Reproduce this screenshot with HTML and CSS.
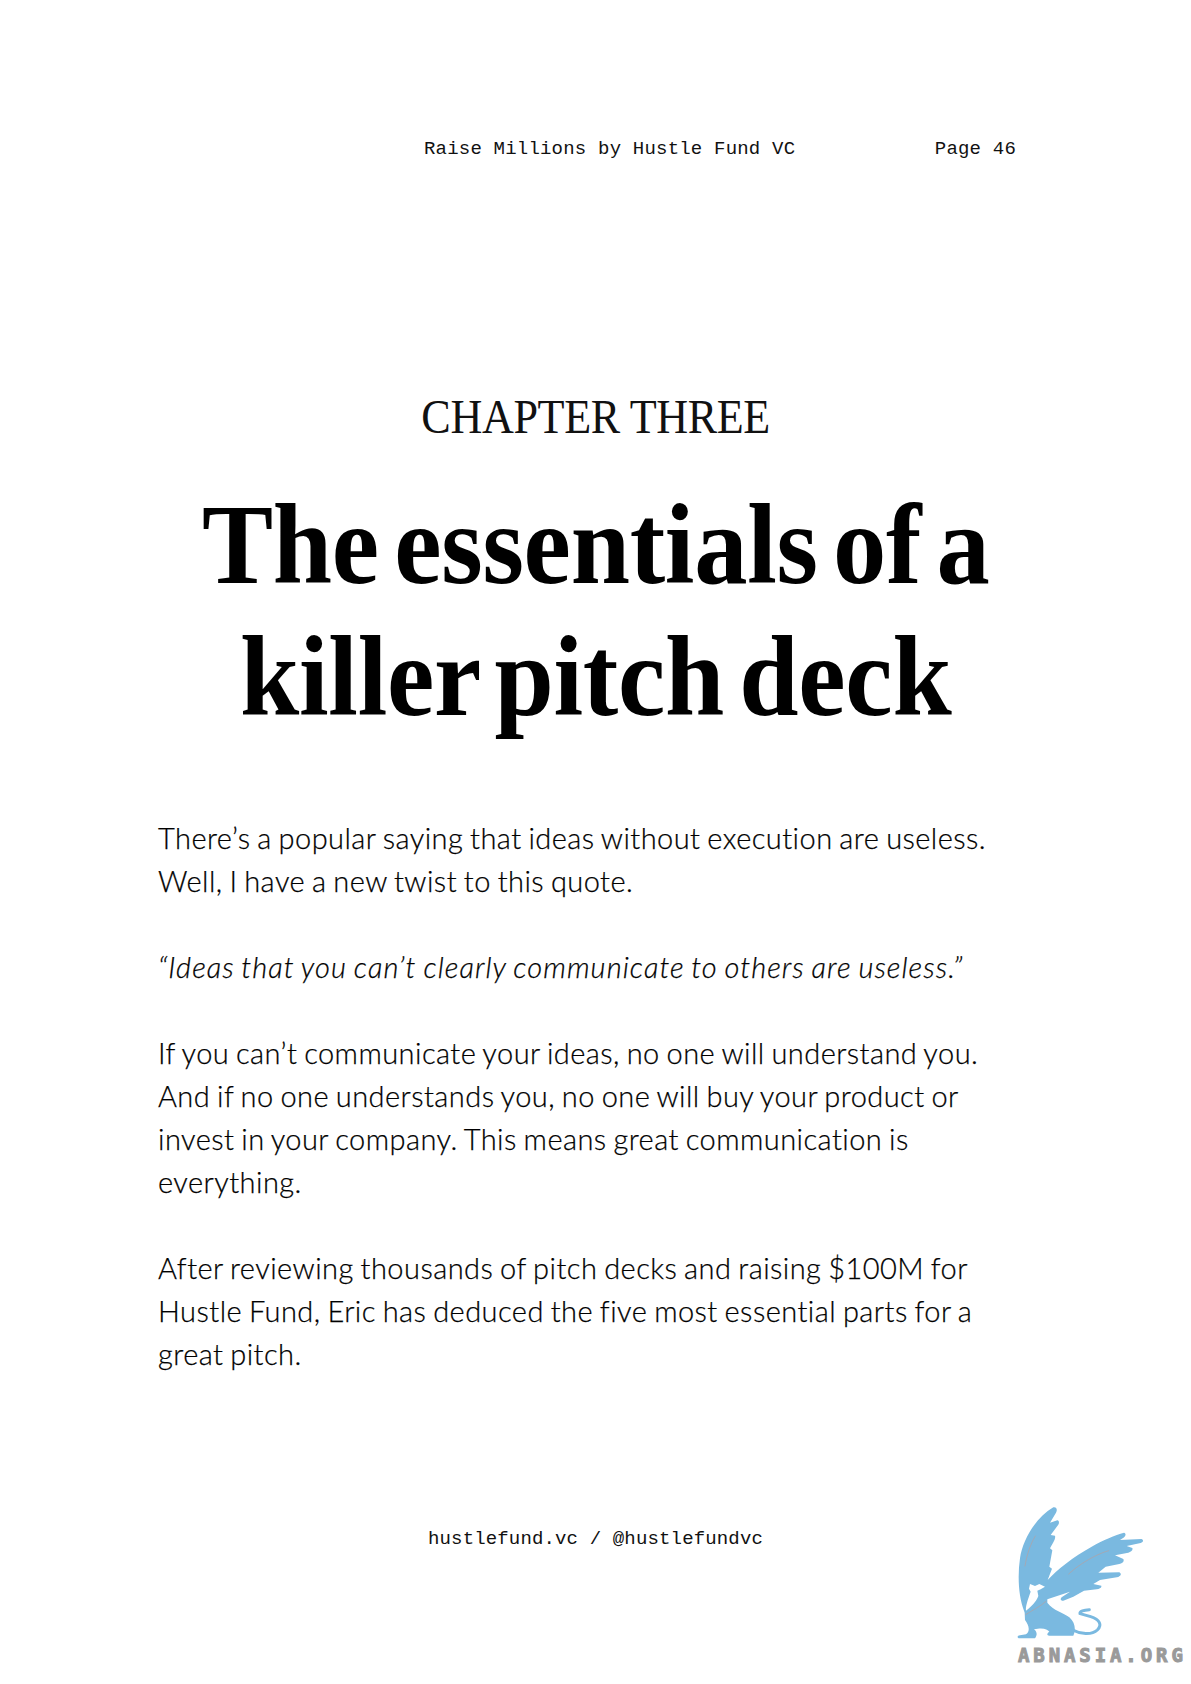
FILE: index.html
```html
<!DOCTYPE html>
<html lang="en">
<head>
<meta charset="utf-8">
<title>Raise Millions by Hustle Fund VC - Page 46</title>
<link rel="stylesheet" href="styles.css">
</head>
<body>
<main class="page">
  <header class="running-head">
    <span>Raise Millions by Hustle Fund VC</span>
    <span>Page 46</span>
  </header>
  <p class="chapter"><span>CHAPTER THREE</span></p>
  <h1 class="title"><span>The essentials of a</span><span>killer pitch deck</span></h1>
  <section class="body-copy">
    <p>There’s a popular saying that ideas without execution are useless.<br>Well, I have a new twist to this quote.</p>
    <p><em>“Ideas that you can’t clearly communicate to others are useless.”</em></p>
    <p>If you can’t communicate your ideas, no one will understand you.<br>And if no one understands you, no one will buy your product or<br>invest in your company. This means great communication is<br>everything.</p>
    <p>After reviewing thousands of pitch decks and raising $100M for<br>Hustle Fund, Eric has deduced the five most essential parts for a<br>great pitch.</p>
  </section>
  <footer class="foot">hustlefund.vc / @hustlefundvc</footer>
</main>
<div class="mark">
  <svg class="griffin" viewBox="0 0 693 612" aria-hidden="true">
    <path class="blue" d="M192 392C176 350 172 290 180 235C188 180 225 115 280 82C290 80 293 90 288 98L270 128L292 121C299 122 298 132 292 138L272 165L285 167C288 178 276 192 270 205L277 211L268 260L276 266L263 300C290 270 340 230 395 200C430 180 465 165 492 158C500 160 497 170 488 175L480 180L544 177C552 180 550 187 542 189L500 198L517 204C520 212 512 216 505 218L465 226L490 237C494 246 486 250 478 252L437 260L415 278L478 277C486 282 482 288 475 291L420 300L400 312L424 317C426 324 418 327 410 328L372 332L340 350L310 362C300 362 300 356 306 351L330 335L262 358L262 368C280 392 310 398 328 412C346 428 348 450 340 467L268 467C258 467 262 458 268 455C262 448 250 442 222 448C232 456 232 466 225 475L178 475C170 473 172 467 180 466L198 463C212 452 206 435 195 420L194 398Z"/>
    <path class="tail" d="M338 450C360 462 395 466 412 450C428 434 418 418 392 410L360 401C358 393 372 390 388 389"/>
    <path class="white" d="M210 312L225 318L238 312L255 320L242 328L232 332L235 348C232 358 222 374 198 392C196 380 203 360 212 335L207 326Z"/>
    <path class="scratch" d="M226 168C212 190 200 225 195 258M446 212C410 222 360 250 326 282M258 364C240 380 215 392 197 404"/>
  </svg>
  <span class="mark-text">ABNASIA.ORG</span>
</div>
</body>
</html>
```
FILE: styles.css
```css
* { box-sizing: border-box; }
html, body { margin: 0; padding: 0; background: #fff; }
body { width: 1191px; height: 1684px; position: relative; overflow: hidden; color: #111; }
.page { display: flex; flex-direction: column; padding: 137px 0 0 158px; width: 1191px; }
.running-head {
  display: flex; justify-content: space-between; width: 592px; margin-left: 266px;
  font: 19px/24px "Liberation Mono", monospace; letter-spacing: 0.2px;
}
.chapter {
  margin: 224px 0 0 -158px; width: 1191px; display: flex; justify-content: center;
  font: 400 49px/64px "Liberation Serif", serif; letter-spacing: -0.4px;
}
.chapter span { display: block; white-space: nowrap; transform: scaleX(0.9); }
.title {
  margin: 30px 0 0 -158px; width: 1191px; display: flex; flex-direction: column; align-items: center;
  font: 700 115px/132px "Liberation Serif", serif; letter-spacing: -0.3px; word-spacing: -12px; color: #000;
}
.title span { display: block; white-space: nowrap; transform: scaleX(0.927); }
.body-copy {
  margin-top: 73px; font: 300 29px/43px "Lato", sans-serif; color: #000;
  font-variant-ligatures: none; letter-spacing: 0.45px; word-spacing: -1.5px;
  -webkit-text-stroke: 0.25px #000;
}
.body-copy p { margin: 0 0 43px; white-space: nowrap; }
.body-copy em { letter-spacing: 1.05px; }
.foot {
  margin: 109px 0 0 -158px; width: 1191px; text-align: center;
  font: 19px/24px "Liberation Mono", monospace; letter-spacing: 0.15px;
}
.mark { position: absolute; left: 960px; top: 1480px; width: 231px; height: 204px; }
.griffin { display: block; width: 231px; height: 204px; }
.blue { fill: #7ab9e0; }
.white { fill: #fff; }
.tail { fill: none; stroke: #7ab9e0; stroke-width: 9; stroke-linecap: round; }
.scratch { fill: none; stroke: #a3a9b5; stroke-width: 3; stroke-linecap: round; }
.mark-text {
  position: absolute; left: 58px; top: 164px; white-space: nowrap;
  font: 700 19px/22px "DejaVu Sans Mono", monospace; letter-spacing: 3.9px; color: #9a9a9a;
  -webkit-text-stroke: 1px #9a9a9a;
}
```
